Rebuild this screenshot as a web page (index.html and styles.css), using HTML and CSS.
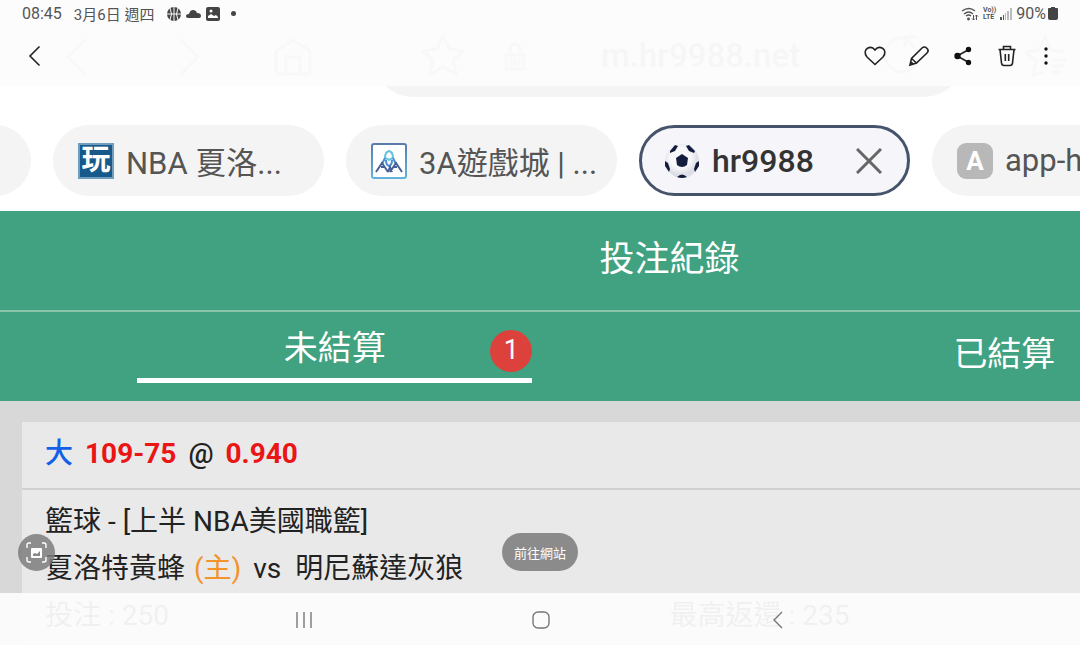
FILE: index.html
```html
<!DOCTYPE html>
<html lang="zh-Hant">

<head>
    <meta charset="UTF-8">
    <meta name="viewport" content="width=device-width, initial-scale=1.0">
    <link rel="stylesheet" href="styles.css">
    <title>投注紀錄</title>
</head>

<body>
    <div class="viewer">

        <!-- the page shown inside the viewer -->
        <main class="photo">
            <div class="browser-bar">
                <div class="browser-nav">
                    <svg width="22" height="40" viewBox="0 0 22 40"><path d="M20 2L2 20l18 18" /></svg>
                    <svg width="22" height="40" viewBox="0 0 22 40"><path d="M2 2l18 18L2 38" /></svg>
                    <svg class="house" width="40" height="40" viewBox="0 0 40 40"><path d="M3 14L20 3l17 11v19q0 4-4 4H7q-4 0-4-4zM13 37V20h14v17" /></svg>
                </div>
                <div class="address">
                    <svg width="44" height="44" viewBox="0 0 44 44"><path d="M22 3l6 13 14 2-10 9 3 14-13-7-13 7 3-14L2 18l14-2z" /></svg>
                    <svg class="lock" width="24" height="32" viewBox="0 0 24 32"><path d="M7 14V8q0-5 5-5t5 5v6M3 14h18v14H3zM8 17v8M12 17v8M16 17v8" /></svg>
                    <span class="url">m.hr9988.net</span>
                    <svg width="44" height="44" viewBox="0 0 44 44"><path d="M24 5A17 17 0 1 0 39 22M25 14V4h12M26 5l9 10" /></svg>
                </div>
                <svg width="44" height="44" viewBox="0 0 44 44"><path d="M20 39l-11 3 3-14L2 19l13-2 6-13 6 13 14 2M28 27h14M28 33h12M28 39h9" /></svg>
            </div>

            <div class="tabs">
                <a class="tab" href="#"></a>
                <a class="tab" href="#">
                    <span class="favicon wan">玩</span>
                    <span class="label">NBA 夏洛...</span>
                </a>
                <a class="tab" href="#">
                    <svg class="favicon" viewBox="0 0 36 36">
                        <defs>
                            <linearGradient id="frame" x2="0" y2="1">
                                <stop offset="0" stop-color="#5a7bab" />
                                <stop offset="1" stop-color="#5fb4dc" />
                            </linearGradient>
                        </defs>
                        <rect x="1" y="1" width="34" height="34" rx="2" fill="#fff" stroke="url(#frame)" stroke-width="2" />
                        <g fill="none" stroke-width="2">
                            <path d="M14 15q0-6 4-7 4 1 4 7l-4 2z" stroke="#63c3df" />
                            <path d="M14 15l-3 6M22 15l3 6M15 17q0 5 3 6 3-1 3-6" stroke="#4b8fd0" />
                            <path d="M5 29l6-9 6 9M19 29l6-9 6 9M10 24h4M22 24h4M17 29l2-5 2 5" stroke="#485f98" />
                        </g>
                    </svg>
                    <span class="label">3A遊戲城 | ...</span>
                </a>
                <a class="tab active" href="#">
                    <svg class="favicon" viewBox="0 0 36 36">
                        <defs>
                            <radialGradient id="ball" cx="45%" cy="40%">
                                <stop offset="60%" stop-color="#f8f8fb" />
                                <stop offset="100%" stop-color="#dedfe6" />
                            </radialGradient>
                        </defs>
                        <circle cx="18" cy="18" r="17" fill="url(#ball)" />
                        <g fill="#141d3d">
                            <path d="M18 11l6 4-1 7q-5 4-10 0l-1-7z" />
                            <path d="M6 8l5-6 3 1-3 5-5 2zM22 3l3-1 6 6-1 2-5-2zM1 18l3 2 2 6-1 3-4-6zM35 18l-3 2-2 6 1 3 4-6zM13 34q5-5 10 0-5 2-10 0z" />
                        </g>
                    </svg>
                    <span class="label">hr9988</span>
                    <svg class="close" viewBox="0 0 26 26"><path d="M1 1l24 24M25 1L1 25" /></svg>
                </a>
                <a class="tab" href="#">
                    <span class="favicon letter">A</span>
                    <span class="label">app-h</span>
                </a>
            </div>

            <div class="site">
                <h1 class="title">投注紀錄</h1>
                <div class="status-tabs">
                    <a class="status current" href="#">未結算<span class="badge">1</span></a>
                    <a class="status" href="#">已結算</a>
                </div>
                <div class="bets">
                    <div class="bet">
                        <div class="odds">
                            <span class="big">大</span>
                            <b>109-75</b>
                            <span class="at">@</span>
                            <b>0.940</b>
                        </div>
                        <div class="detail">
                            <p>籃球 - [上半 NBA美國職籃]</p>
                            <p>夏洛特黃蜂 <span class="home">(主)</span> vs&nbsp; 明尼蘇達灰狼</p>
                            <div class="amounts">
                                <span>投注 : 250</span>
                                <span>最高返還 : 235</span>
                            </div>
                        </div>
                    </div>
                </div>
            </div>
        </main>

        <header class="topbar">
            <div class="statusbar">
                <span class="clock">08:45</span>
                <span class="date">3月6日 週四</span>
                <svg width="14" height="14" viewBox="0 0 14 14">
                    <circle cx="7" cy="7" r="7" fill="#444" />
                    <path d="M7 0v14M0 7h14M3 1q3 6 0 12M11 1q-3 6 0 12" fill="none" stroke="#fcfcfc" />
                </svg>
                <svg width="15" height="10" viewBox="0 0 15 10"><path d="M3 9Q0 9 0 7t3-2Q4 1 7 1t4 3q4 0 4 3 0 2-2 2z" fill="#444" /></svg>
                <svg width="14" height="14" viewBox="0 0 14 14">
                    <rect width="14" height="14" rx="2" fill="#444" />
                    <path d="M2 11V9l3-2 3 2 2-1 2 2v1z" fill="#fcfcfc" />
                    <circle cx="5" cy="4" r="1.5" fill="#fcfcfc" />
                </svg>
                <span class="dot"></span>
                <div class="signals">
                    <svg width="18" height="14" viewBox="0 0 18 14" fill="none" stroke="#555" stroke-width="1.3">
                        <path d="M1 4q7-5 13 0M3 7q5-4 9 0M5 9q3-2 5 0" />
                        <circle cx="7.5" cy="12" r=".8" fill="#555" />
                        <path d="M12.500 8v5M11 11.500l1.500 1.500 1.500-1.500M15.500 13V8M14 9.500L15.500 8 17 9.500" stroke-width="1" />
                    </svg>
                    <span class="volte">Vo))<br>LTE</span>
                    <svg width="12" height="12" viewBox="0 0 12 12">
                        <path d="M0 9h2v3H0zM3 7h1v5H3z" fill="#555" />
                        <path d="M5 5h1v7H5zM7 3h2v9H7zM10 0h2v12h-2z" fill="#bbb" />
                    </svg>
                    <span class="percent">90%</span>
                    <svg width="10" height="13" viewBox="0 0 10 13"><path d="M3 0h4v1h2q1 0 1 1v9q0 2-2 2H2q-2 0-2-2V2q0-1 1-1h2z" fill="#444" /></svg>
                </div>
            </div>
            <div class="toolbar">
                <button type="button" aria-label="返回"><svg width="24" height="24" viewBox="0 0 24 24"><path d="M16.500 2.500L7 12l9.500 9.500" /></svg></button>
                <div class="actions">
                    <button type="button" aria-label="喜愛"><svg width="24" height="24" viewBox="0 0 24 24"><path d="M12 20.500L4 13C1 9.500 2 5.500 4.500 4.200 7.500 2.600 10.500 4 12 6c1.500-2 4.500-3.400 7.500-1.800C22 5.500 23 9.500 20 13z" /></svg></button>
                    <button type="button" aria-label="編輯"><svg width="24" height="24" viewBox="0 0 24 24"><path d="M3 21l1.500-6.500L15 4q2.500-2 4.500 0l1 1q1.500 2-.5 4L9.500 19zM4.500 14.500l5 4.500M3 21l1-3 2 2z" /></svg></button>
                    <button type="button" aria-label="分享"><svg width="24" height="24" viewBox="0 0 24 24">
                        <path d="M18 5.500L6 12l12 6.500" />
                        <g fill="#111" stroke="none"><circle cx="17.500" cy="5.500" r="2.700" /><circle cx="6.500" cy="12" r="3.200" /><circle cx="17.500" cy="18.500" r="2.700" /></g>
                    </svg></button>
                    <button type="button" aria-label="刪除"><svg width="24" height="24" viewBox="0 0 24 24"><path d="M3.500 5.500h17M8.500 5.500v-3h7v3M5 5.500L6.500 19q.3 2.500 2.500 2.500h6q2.200 0 2.500-2.500L19 5.500M10.300 10v7M13.700 10v7" /></svg></button>
                    <button type="button" class="more" aria-label="更多"><svg width="24" height="24" viewBox="0 0 24 24"><g fill="#111" stroke="none"><circle cx="12" cy="5" r="1.700" /><circle cx="12" cy="12" r="1.700" /><circle cx="12" cy="19" r="1.700" /></g></svg></button>
                </div>
            </div>
        </header>

        <button type="button" class="capture" aria-label="擷取文字">
            <svg width="21" height="21" viewBox="0 0 21 21">
                <path d="M1 6V3q0-2 2-2h2M16 1h2q2 0 2 2v3M20 15v3q0 2-2 2h-2M5 20H3q-2 0-2-2v-3" fill="none" stroke="#fff" stroke-width="1.400" />
                <rect x="5" y="6" width="11" height="10" rx="1" fill="#fff" />
                <path d="M7 14v-2l2-1 2 1 3-3v5z" fill="#888" />
            </svg>
        </button>
        <button type="button" class="visit">前往網站</button>

        <nav class="navbar">
            <button type="button" aria-label="最近"><svg width="18" height="18" viewBox="0 0 18 18"><path d="M2 1v16M9 1v16M16 1v16" /></svg></button>
            <button type="button" aria-label="首頁"><svg width="18" height="18" viewBox="0 0 18 18"><rect x="1" y="1" width="16" height="16" rx="5" /></svg></button>
            <button type="button" aria-label="上一頁"><svg width="18" height="18" viewBox="0 0 18 18"><path d="M13 1L5 9l8 8" /></svg></button>
        </nav>

    </div>
</body>

</html>
```
FILE: styles.css
```css
html {
    box-sizing: border-box;
}

*,
*::before,
*::after {
    margin: 0;
    padding: 0;
    box-sizing: inherit;
}

body {
    font-family: Roboto, "Noto Sans CJK TC", sans-serif;
    color: #222;
}

a {
    color: inherit;
    text-decoration: none;
}

button {
    border: none;
    background: none;
    font: inherit;
    cursor: pointer;
}

svg {
    display: block;
    flex: none;
}

.viewer {
    position: relative;
    height: 100vh;
    overflow: hidden;
    background-color: white;
}

/* browser chrome */

.browser-bar {
    display: flex;
    align-items: flex-end;
    height: 97px;
    padding: 0 12px 0 66px;
    color: #aaa;
}

.browser-bar svg {
    margin-bottom: 20px;
    fill: none;
    stroke: currentColor;
    stroke-width: 3;
}

.browser-nav {
    display: flex;
    gap: 90px;
    width: 247px;
}

.browser-nav .house {
    margin-left: -17px;
}

.address {
    display: flex;
    flex: 1;
    align-items: flex-end;
    height: 80px;
    margin: 0 60px;
    padding: 0 40px 0 48px;
    border-radius: 40px;
    background-color: #f4f4f4;
}

.address .lock {
    margin: 0 0 24px 38px;
}

.url {
    flex: 1;
    margin-left: 74px;
    padding-bottom: 22px;
    color: #888;
    font-size: 33px;
    font-weight: 500;
    line-height: 38px;
}

.tabs {
    display: flex;
    gap: 22px;
    margin: 28px 0 15px -240px;
}

.tab {
    display: flex;
    flex: none;
    align-items: center;
    gap: 12px;
    width: 271px;
    height: 71px;
    padding: 0 25px;
    border-radius: 36px;
    background-color: #f4f4f4;
    color: #555;
    font-size: 31px;
}

.tab.active {
    border: 3px solid #46546b;
    padding: 0 25px 0 22px;
    background-color: #f6f6fa;
    color: #333;
    font-size: 32px;
    font-weight: 500;
}

.label {
    white-space: nowrap;
}

.favicon {
    flex: none;
    width: 36px;
    height: 36px;
    line-height: 36px;
    text-align: center;
}

.wan {
    border: 2px solid #6f9dbd;
    background-color: #17598a;
    color: white;
    font-size: 29px;
    font-weight: 700;
    line-height: 30px;
}

.letter {
    border-radius: 9px;
    background-color: #b8b8b8;
    color: white;
    font-size: 26px;
    font-weight: 700;
}

.close {
    width: 26px;
    height: 26px;
    margin-left: auto;
    fill: none;
    stroke: #666;
    stroke-width: 3;
}

/* betting site, wider than the screen */

.site {
    width: 124%;
}

.title {
    height: 101px;
    border-bottom: 2px solid #8cc4ab;
    background-color: #40a280;
    color: white;
    font-size: 35px;
    font-weight: 400;
    line-height: 97px;
    text-align: center;
}

.status-tabs {
    display: grid;
    grid-template-columns: 1fr 1fr;
    justify-items: center;
    align-items: center;
    height: 89px;
    background-color: #40a280;
    color: white;
    font-size: 34px;
}

.status {
    position: relative;
    width: 59%;
    margin-bottom: 6px;
    line-height: 60px;
    text-align: center;
}

.current {
    border-bottom: 5px solid white;
    margin-bottom: 13px;
}

.badge {
    position: absolute;
    top: 12px;
    right: 0;
    width: 42px;
    height: 42px;
    border-radius: 50%;
    background-color: #dc413b;
    font-size: 27px;
    line-height: 40px;
}

.bets {
    padding: 21px 22px;
    background-color: #d8d8d8;
}

.bet {
    background-color: #e9e9e9;
    font-size: 28px;
    line-height: 47px;
}

.odds {
    display: flex;
    gap: 12px;
    padding: 8px 23px 11px;
    border-bottom: 2px solid #d0d0d0;
}

.odds b {
    color: #ea1515;
    font-weight: 700;
}

.big {
    color: #1260ea;
    font-weight: 500;
}

.at {
    font-weight: 500;
}

.detail {
    padding: 8px 23px;
}

.home {
    margin: 0 5px 0 2px;
    color: #f2932b;
}

.amounts {
    display: grid;
    grid-template-columns: 1fr 1fr;
}

/* viewer overlays */

.topbar {
    position: absolute;
    top: 0;
    left: 0;
    right: 0;
    height: 86px;
    background-color: rgba(252, 252, 252, 0.95);
}

.statusbar {
    display: flex;
    align-items: center;
    height: 27px;
    padding: 0 22px;
    gap: 5px;
    color: #555;
    font-size: 16px;
}

.date {
    margin: 0 8px 0 7px;
    font-size: 15px;
}

.dot {
    width: 5px;
    height: 5px;
    margin-left: 6px;
    border-radius: 50%;
    background-color: #444;
}

.signals {
    display: flex;
    align-items: center;
    gap: 4px;
    margin-left: auto;
}

.volte {
    font-size: 7px;
    font-weight: 700;
    line-height: 7px;
}

.percent {
    margin-right: -2px;
}

.toolbar {
    display: flex;
    justify-content: space-between;
    padding: 7px 17px 0 13px;
}

.toolbar button {
    display: flex;
    align-items: center;
    justify-content: center;
    width: 44px;
    height: 44px;
}

.toolbar .more {
    width: 34px;
}

.toolbar svg {
    fill: none;
    stroke: #222;
    stroke-width: 1.6;
}

.actions {
    display: flex;
}

.capture {
    position: absolute;
    left: 18px;
    bottom: 74px;
    display: flex;
    align-items: center;
    justify-content: center;
    width: 37px;
    height: 37px;
    border-radius: 50%;
    background-color: rgba(125, 125, 125, 0.85);
}

.visit {
    position: absolute;
    left: 50%;
    bottom: 74px;
    width: 76px;
    height: 38px;
    border-radius: 19px;
    background-color: #8b8b8b;
    color: white;
    font-size: 13px;
    transform: translateX(-50%);
}

.navbar {
    position: absolute;
    left: 0;
    right: 0;
    bottom: 0;
    display: flex;
    justify-content: center;
    height: 52px;
    padding: 2px 0 0 2px;
    background-color: rgba(252, 252, 252, 0.95);
}

.navbar button {
    display: flex;
    align-items: center;
    justify-content: center;
    width: 22%;
}

.navbar svg {
    fill: none;
    stroke: #777;
    stroke-width: 1.4;
}
```
